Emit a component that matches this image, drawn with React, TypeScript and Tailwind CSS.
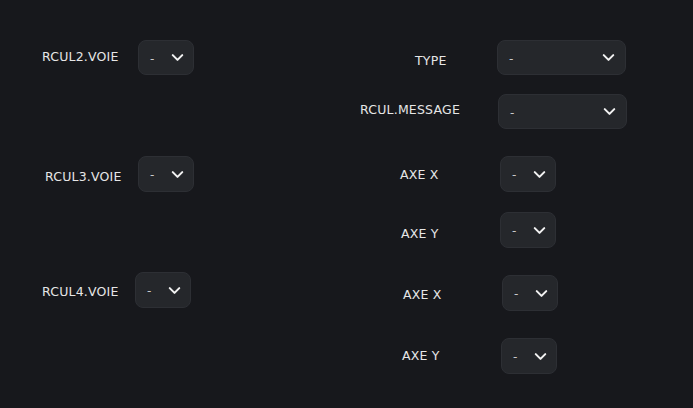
import React from "react";
import { ChevronDown } from "lucide-react";

function Select({ className }: { className: string }) {
  return (
    <div
      className={
        "flex items-center justify-between rounded-lg border border-[#2d2f34] bg-[#25272b] pl-[11px] pr-[6px] " +
        className
      }
    >
      <span className="mt-[2px] text-[12px] leading-none text-[#c8c9cc]">-</span>
      <ChevronDown size={19} strokeWidth={2.6} className="text-[#f2f2f2]" />
    </div>
  );
}

export default function App() {
  return (
    <div
      className="flex h-[408px] w-[693px] bg-[#17181c] text-[12.5px] leading-[16px] tracking-[0.2px] text-[#e6e6e6]"
      style={{ fontFamily: '"DejaVu Sans", "Liberation Sans", sans-serif' }}
    >
      {/* Left column */}
      <div className="flex w-[350px] flex-col">
        <div className="mt-[40px] flex">
          <div className="w-[138px] pl-[42px] pt-[9px]">RCUL2.VOIE</div>
          <Select className="h-[35px] w-[56px]" />
        </div>
        <div className="mt-[81px] flex">
          <div className="w-[138px] pl-[45px] pt-[13px]">RCUL3.VOIE</div>
          <Select className="h-[36px] w-[56px]" />
        </div>
        <div className="mt-[80px] flex">
          <div className="w-[135px] pl-[42px] pt-[12px]">RCUL4.VOIE</div>
          <Select className="h-[36px] w-[56px]" />
        </div>
      </div>

      {/* Right column */}
      <div className="flex flex-1 flex-col">
        <div className="mt-[40px] flex">
          <div className="w-[147px] pl-[65px] pt-[13px]">TYPE</div>
          <Select className="h-[35px] w-[129px] pr-[7px]" />
        </div>
        <div className="mt-[19px] flex">
          <div className="w-[148px] pl-[10px] pt-[8px]">RCUL.MESSAGE</div>
          <Select className="h-[35px] w-[129px] pr-[7px]" />
        </div>
        <div className="mt-[27px] flex">
          <div className="w-[150px] pl-[50px] pt-[11px]">AXE X</div>
          <Select className="h-[36px] w-[56px]" />
        </div>
        <div className="mt-[20px] flex">
          <div className="w-[150px] pl-[51px] pt-[14px]">AXE Y</div>
          <Select className="h-[36px] w-[56px]" />
        </div>
        <div className="mt-[27px] flex">
          <div className="w-[152px] pl-[53px] pt-[12px]">AXE X</div>
          <Select className="h-[36px] w-[56px]" />
        </div>
        <div className="mt-[27px] flex">
          <div className="w-[151px] pl-[52px] pt-[10px]">AXE Y</div>
          <Select className="h-[36px] w-[56px]" />
        </div>
      </div>
    </div>
  );
}
